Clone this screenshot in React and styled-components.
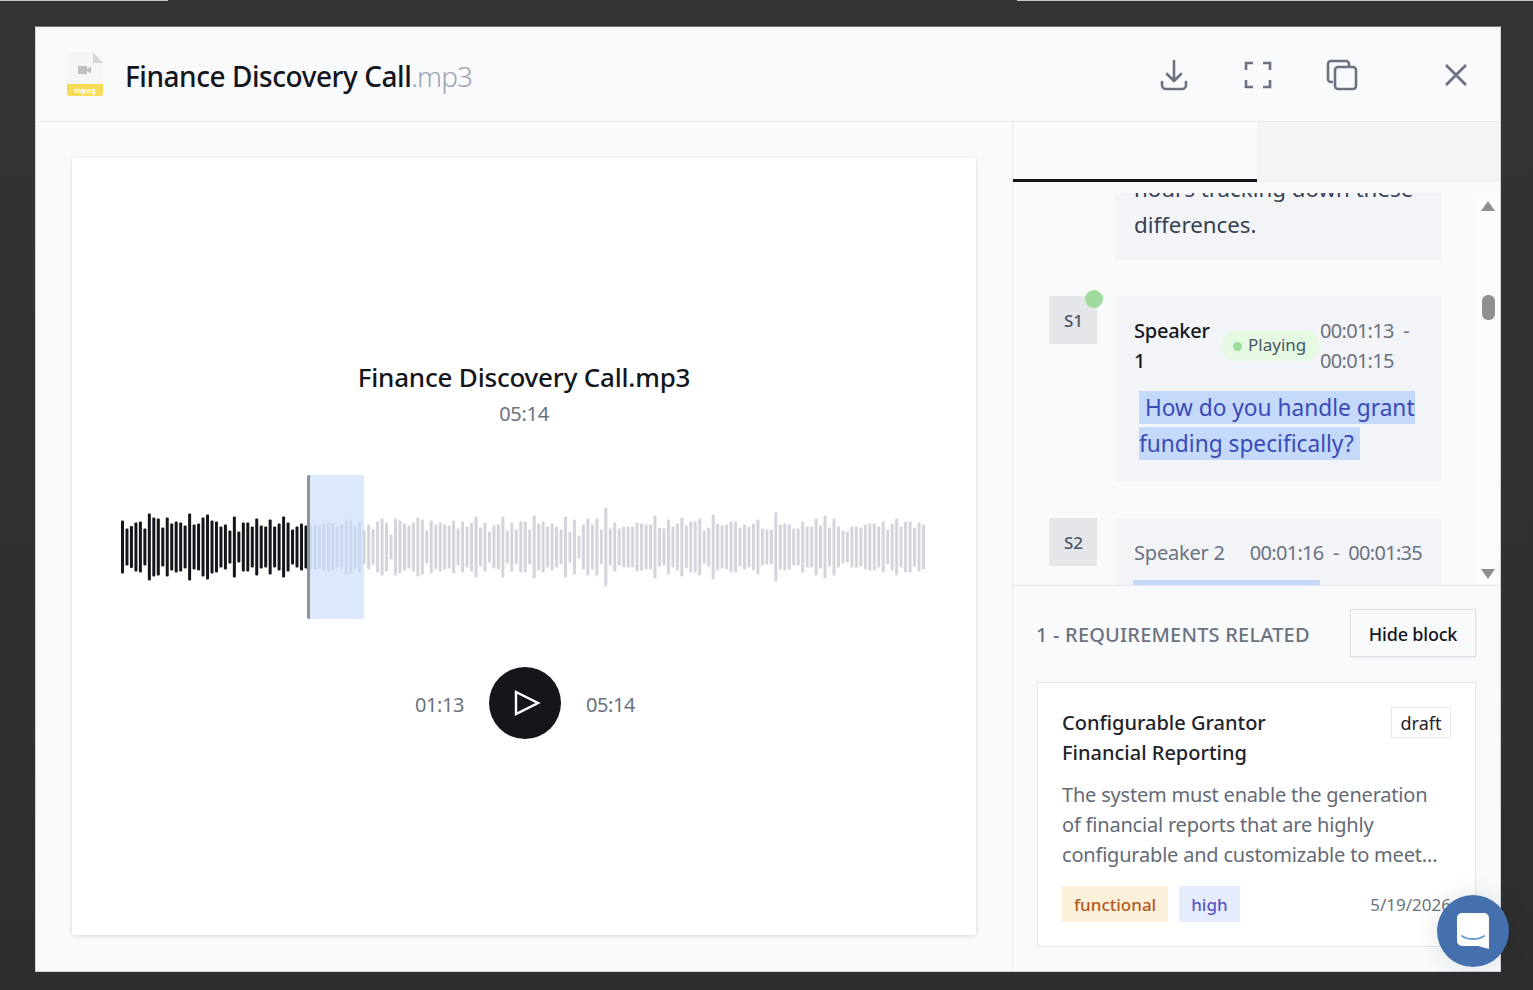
import React from 'react';
import styled, { createGlobalStyle } from 'styled-components';

const FONT = '"Noto Sans", "Open Sans", sans-serif';

const BARS = [
  53, 37, 42, 49, 51, 37, 67, 59, 57, 39, 59, 47, 51, 49, 43, 67, 45, 47, 59, 65, 53, 51, 41, 45, 33, 61, 31, 49, 49, 41,
  57, 43, 41, 55, 41, 47, 61, 49, 35, 41, 47, 43, 45, 45, 43, 47, 49, 47, 41, 45, 55, 53, 43, 51, 34, 45, 36, 51, 57, 49,
  25, 57, 53, 47, 43, 49, 59, 55, 33, 53, 45, 49, 45, 43, 53, 37, 51, 41, 49, 61, 39, 49, 31, 43, 45, 61, 33, 49, 35, 51,
  51, 35, 63, 47, 51, 41, 47, 41, 35, 61, 31, 55, 23, 45, 57, 45, 57, 35, 79, 37, 49, 37, 41, 41, 41, 49, 47, 45, 45, 63,
  39, 37, 55, 41, 47, 59, 43, 51, 51, 57, 33, 39, 65, 47, 43, 45, 51, 51, 39, 45, 41, 47, 55, 37, 35, 35, 69, 45, 47, 45,
  37, 37, 51, 41, 41, 57, 43, 63, 39, 57, 41, 33, 31, 41, 41, 39, 45, 47, 47, 41, 51, 35, 47, 57, 41, 51, 51, 39, 49, 45,
];
const PLAYED = 42;
const WAVE_WIDTH = 804;
const BAR_WIDTH = 3;

const GlobalStyle = createGlobalStyle`
  html, body {
    margin: 0;
    height: 100%;
    background: #333333;
    font-family: ${FONT};
    overflow: hidden;
  }
  * { box-sizing: border-box; }
`;

const Page = styled.div`
  width: 1533px;
  height: 990px;
  display: flex;
  flex-direction: column;
  background: linear-gradient(#343434, #2e2e2e);
`;

const TopEdge = styled.div`
  height: 1px;
  flex: none;
  display: flex;
  justify-content: space-between;
`;

const EdgePiece = styled.span`
  width: ${(p) => p.$width}px;
  background: #c4c7cd;
`;

const ModalSlot = styled.div`
  flex: 1;
  min-height: 0;
  padding: 25px 32px 18px 35px;
`;

const Modal = styled.div`
  height: 100%;
  display: flex;
  flex-direction: column;
  background: #f9fafc;
  border: 1px solid #cfd2d8;
  border-top-color: #6f7278;
`;

const Header = styled.header`
  height: 95px;
  flex: none;
  display: flex;
  align-items: center;
  padding: 0 2px 0 29px;
  border-bottom: 1px solid #e8eaee;
`;

const FileIcon = styled.svg`
  width: 40px;
  height: 46px;
  flex: none;
  margin-right: 20px;
`;

const FileName = styled.h1`
  flex: 1;
  margin: 4px 0 0;
  font-size: 28px;
  font-weight: 500;
  letter-spacing: -0.45px;
  color: #14161c;
`;

const Extension = styled.span`
  font-weight: 300;
  letter-spacing: -1px;
  color: #9ca3af;
`;

const HeaderActions = styled.div`
  display: flex;
  align-items: center;
  margin-top: 2px;
`;

const ActionButton = styled.button`
  width: 84px;
  height: 40px;
  padding: 0;
  border: 0;
  background: none;
  display: flex;
  align-items: center;
  justify-content: center;
  color: #6b7280;
`;

const CloseButton = styled(ActionButton)`
  margin-left: 30px;
`;

const Body = styled.div`
  flex: 1;
  min-height: 0;
  display: flex;
`;

const PlayerPane = styled.section`
  width: 976px;
  flex: none;
  padding: 36px;
`;

const PlayerCard = styled.div`
  height: 777px;
  display: flex;
  flex-direction: column;
  align-items: center;
  justify-content: center;
  padding: 4px 49px 0;
  background: #ffffff;
  box-shadow: 0 1px 4px rgba(30, 40, 60, 0.16);
  border-radius: 2px;
`;

const TrackTitle = styled.div`
  font-size: 26px;
  line-height: 36px;
  font-weight: 500;
  letter-spacing: -0.2px;
  color: #14161c;
`;

const TrackLength = styled.div`
  margin-top: 5px;
  font-size: 20px;
  line-height: 28px;
  letter-spacing: -0.3px;
  color: #6b7280;
`;

const Wave = styled.div`
  position: relative;
  width: ${WAVE_WIDTH + 2}px;
  height: 144px;
  margin-top: 47px;
`;

const WaveDrawing = styled.svg`
  display: block;
`;

const Selection = styled.div`
  position: absolute;
  top: 0;
  bottom: 0;
  left: 186px;
  width: 57px;
  background: rgba(196, 217, 250, 0.6);
  border-left: 3px solid #8e9299;
  border-radius: 2px;
`;

const Controls = styled.div`
  display: flex;
  align-items: center;
  gap: 25px;
  margin: 48px 0 0 2px;
  font-size: 20px;
  letter-spacing: -0.4px;
  color: #6b7280;
`;

const ControlTime = styled.span`
  padding-top: 4px;
`;

const PlayButton = styled.button`
  width: 72px;
  height: 72px;
  padding: 0;
  border: 0;
  border-radius: 50%;
  background: #14161c;
  display: flex;
  align-items: center;
  justify-content: center;

  svg {
    margin-left: 3px;
  }
`;

const SidePane = styled.aside`
  flex: 1;
  min-width: 0;
  display: flex;
  flex-direction: column;
  border-left: 1px solid #e8eaee;
`;

const Tabs = styled.div`
  height: 60px;
  flex: none;
  display: flex;
`;

const Tab = styled.div`
  flex: 1;
  background: ${(p) => (p.$active ? '#f9fafc' : '#f4f4f4')};
  border-bottom: ${(p) => (p.$active ? '3px solid #14161c' : '0')};
`;

const TranscriptArea = styled.div`
  height: 403px;
  flex: none;
  display: flex;
  padding-top: 11px;
`;

const TranscriptClip = styled.div`
  flex: 1;
  min-width: 0;
  overflow: hidden;
`;

const TranscriptList = styled.div`
  margin-top: -22px;
  padding: 0 36px 0 36px;
  display: flex;
  flex-direction: column;
  gap: 36px;
`;

const Entry = styled.div`
  display: flex;
  align-items: flex-start;
  gap: 18px;
  padding-left: ${(p) => p.$indent || 0}px;
`;

const Avatar = styled.div`
  position: relative;
  width: 48px;
  height: 48px;
  flex: none;
  display: flex;
  align-items: center;
  justify-content: center;
  padding-left: 1px;
  background: #e5e6e9;
  font-size: 17px;
  font-weight: 500;
  color: #4b5563;
`;

const LiveDot = styled.span`
  position: absolute;
  top: -6px;
  right: -6px;
  width: 18px;
  height: 18px;
  border-radius: 50%;
  background: #9edb9c;
`;

const Bubble = styled.div`
  width: 326px;
  flex: none;
  background: #f3f4f8;
  padding: ${(p) => (p.$clipped ? '0 19px 17px' : '20px 19px 20px')};
`;

const BubbleHead = styled.div`
  display: flex;
  align-items: center;
  font-size: 20px;
  line-height: 30px;
`;

const SpeakerName = styled.div`
  width: 87px;
  flex: none;
  font-weight: 500;
  letter-spacing: -0.25px;
  color: #14161c;
`;

const MutedSpeaker = styled.div`
  flex: none;
  margin-right: 25px;
  white-space: nowrap;
  letter-spacing: -0.2px;
  color: #6b7280;
`;

const PlayingPill = styled.div`
  width: 99px;
  height: 30px;
  flex: none;
  display: flex;
  align-items: center;
  gap: 6px;
  padding: 0 0 2px 12px;
  border-radius: 15px;
  background: #e6f9e3;
  font-size: 17px;
  color: #4b5563;
`;

const PillDot = styled.span`
  width: 9px;
  height: 9px;
  margin-top: 2px;
  border-radius: 50%;
  background: #9edb9c;
`;

const TimeRange = styled.div`
  letter-spacing: -0.7px;
  word-spacing: 5px;
  color: #6b7280;
  white-space: ${(p) => (p.$single ? 'nowrap' : 'normal')};
`;

const Speech = styled.p`
  margin: 0;
  font-size: 22.3px;
  line-height: 36px;
  color: #374151;
`;

const ActiveSpeech = styled(Speech)`
  margin-top: 14px;
  padding-left: 5px;
  font-size: 22.7px;
  color: #3a4bb8;
`;

const Highlight = styled.span`
  background: #c5d9fb;
  padding: 1px 0;
`;

const NextLine = styled.div`
  width: 187px;
  height: 5px;
  margin: 12px 0 0 -1px;
  background: #c5d9fb;
`;

const Scrollbar = styled.div`
  width: 23px;
  flex: none;
  display: flex;
  flex-direction: column;
  align-items: center;
  padding: 8px 1px 6px 0;
  background: #fafbfd;
`;

const ArrowUp = styled.span`
  width: 0;
  height: 0;
  border: 7px solid transparent;
  border-top: 0;
  border-bottom: 10px solid #8e8f93;
`;

const ArrowDown = styled(ArrowUp)`
  border-top: 10px solid #8e8f93;
  border-bottom: 0;
  margin-top: auto;
`;

const Thumb = styled.span`
  width: 13px;
  height: 25px;
  margin-top: 84px;
  border-radius: 6px;
  background: #8e8f93;
`;

const Requirements = styled.div`
  flex: 1;
  min-height: 0;
  padding: 23px 24px 0;
  border-top: 1px solid #e5e7eb;
`;

const RequirementsHead = styled.div`
  display: flex;
  align-items: center;
  justify-content: space-between;
  height: 48px;
`;

const RequirementsTitle = styled.div`
  margin-left: -1px;
  padding-top: 2px;
  font-size: 20px;
  font-weight: 500;
  letter-spacing: 0.2px;
  color: #6b7280;
`;

const HideButton = styled.button`
  width: 126px;
  height: 48px;
  padding: 2px 0 0;
  border: 1px solid #dde0e6;
  background: #f9fafc;
  font: 500 18px ${FONT};
  letter-spacing: -0.2px;
  color: #14161c;
  box-shadow: 0 1px 2px rgba(30, 40, 60, 0.06);
`;

const RequirementCard = styled.div`
  height: 265px;
  margin-top: 25px;
  padding: 25px 24px 0;
  background: #ffffff;
  border: 1px solid #e5e7eb;
`;

const CardHead = styled.div`
  display: flex;
  align-items: flex-start;
  justify-content: space-between;
`;

const CardTitle = styled.div`
  width: 230px;
  font-size: 20px;
  line-height: 30px;
  font-weight: 500;
  color: #1f2229;
`;

const StatusChip = styled.span`
  width: 60px;
  height: 31px;
  margin-top: -1px;
  display: flex;
  align-items: center;
  justify-content: center;
  background: #ffffff;
  border: 1px solid #e5e7eb;
  font-size: 18px;
  color: #1f2229;
`;

const Description = styled.p`
  max-width: 384px;
  margin: 12px 0 0;
  font-size: 20px;
  line-height: 30px;
  letter-spacing: -0.2px;
  color: #646a76;
  display: -webkit-box;
  -webkit-box-orient: vertical;
  -webkit-line-clamp: 3;
  overflow: hidden;
`;

const CardFoot = styled.div`
  display: flex;
  align-items: center;
  gap: 11px;
  margin-top: 16px;
`;

const Tag = styled.span`
  height: 36px;
  padding: 0 12px;
  display: flex;
  align-items: center;
  font-size: 17px;
  font-weight: 500;
  background: ${(p) => (p.$kind === 'type' ? '#fbf0d9' : '#e5edfc')};
  color: ${(p) => (p.$kind === 'type' ? '#b45a1f' : '#5a55c9')};
`;

const DateText = styled.span`
  margin-left: auto;
  font-size: 17px;
  color: #6b7280;
`;

const ChatButton = styled.button`
  position: fixed;
  left: 1437px;
  top: 895px;
  width: 72px;
  height: 72px;
  padding: 0;
  border: 0;
  border-radius: 50%;
  background: #4570ae;
  display: flex;
  align-items: center;
  justify-content: center;
  box-shadow: 0 0 24px rgba(20, 25, 40, 0.12);
`;

const Waveform = () => {
  const pitch = (WAVE_WIDTH - BAR_WIDTH) / (BARS.length - 1);
  return (
    <WaveDrawing width={WAVE_WIDTH} height="144" viewBox={`0 0 ${WAVE_WIDTH} 144`}>
      {BARS.map((h, i) => (
        <rect
          key={i}
          x={i * pitch}
          y={72 - h / 2}
          width={BAR_WIDTH}
          height={h}
          rx="1"
          fill={i < PLAYED ? '#14161c' : '#d2d5db'}
        />
      ))}
    </WaveDrawing>
  );
};

export default function App() {
  return (
    <Page>
      <GlobalStyle />
      <TopEdge>
        <EdgePiece $width={168} />
        <EdgePiece $width={516} />
      </TopEdge>
      <ModalSlot>
        <Modal>
          <Header>
            <FileIcon viewBox="0 0 40 46">
              <path d="M3 1h25l10 11v30a3 3 0 0 1-3 3H5a3 3 0 0 1-3-3V2z" fill="#f5f5f5" />
              <path d="M28 1l10 11H28z" fill="#d4d5d9" />
              <path d="M2 33h36v9a3 3 0 0 1-3 3H5a3 3 0 0 1-3-3z" fill="#f6dc55" />
              <rect x="13" y="15" width="9" height="8" fill="#bfc0c4" />
              <path d="M22 18l4-2.5v7L22 20z" fill="#bfc0c4" />
              <text x="20" y="42" textAnchor="middle" fontSize="7.5" fontWeight="700" fill="#ffffff" fontFamily={FONT}>mpeg</text>
            </FileIcon>
            <FileName>Finance Discovery Call<Extension>.mp3</Extension></FileName>
            <HeaderActions>
              <ActionButton aria-label="Download">
                <svg width="30" height="32" viewBox="0 0 30 32" fill="none" stroke="currentColor" strokeWidth="2.6" strokeLinecap="round" strokeLinejoin="round">
                  <path d="M15 2v20M8 15l7 7 7-7" />
                  <path d="M3 23v3a4 4 0 0 0 4 4h16a4 4 0 0 0 4-4v-3" />
                </svg>
              </ActionButton>
              <ActionButton aria-label="Fullscreen">
                <svg width="28" height="28" viewBox="0 0 28 28" fill="none" stroke="currentColor" strokeWidth="2.6">
                  <path d="M9 2H2v7M19 2h7v7M9 26H2v-7M19 26h7v-7" />
                </svg>
              </ActionButton>
              <ActionButton aria-label="Copy">
                <svg width="32" height="32" viewBox="0 0 32 32" fill="none" stroke="currentColor" strokeWidth="2.6" strokeLinejoin="round">
                  <path d="M7 23H5a3 3 0 0 1-3-3V5a3 3 0 0 1 3-3h15a3 3 0 0 1 3 3v2" />
                  <rect x="9" y="8" width="21" height="22" rx="3" />
                </svg>
              </ActionButton>
              <CloseButton aria-label="Close">
                <svg width="24" height="24" viewBox="0 0 24 24" fill="none" stroke="currentColor" strokeWidth="2.8">
                  <path d="M2 2l20 20M22 2L2 22" />
                </svg>
              </CloseButton>
            </HeaderActions>
          </Header>
          <Body>
            <PlayerPane>
              <PlayerCard>
                <TrackTitle>Finance Discovery Call.mp3</TrackTitle>
                <TrackLength>05:14</TrackLength>
                <Wave>
                  <Waveform />
                  <Selection />
                </Wave>
                <Controls>
                  <ControlTime>01:13</ControlTime>
                  <PlayButton aria-label="Play">
                    <svg width="28" height="28" viewBox="0 0 28 28" fill="none" stroke="#ffffff" strokeWidth="2.4" strokeLinejoin="miter">
                      <path d="M3 3l22 11L3 25z" />
                    </svg>
                  </PlayButton>
                  <ControlTime>05:14</ControlTime>
                </Controls>
              </PlayerCard>
            </PlayerPane>
            <SidePane>
              <Tabs>
                <Tab $active />
                <Tab />
              </Tabs>
              <TranscriptArea>
                <TranscriptClip>
                  <TranscriptList>
                    <Entry $indent={66}>
                      <Bubble $clipped>
                        <Speech>hours tracking down these differences.</Speech>
                      </Bubble>
                    </Entry>
                    <Entry>
                      <Avatar>S1<LiveDot /></Avatar>
                      <Bubble>
                        <BubbleHead>
                          <SpeakerName>Speaker 1</SpeakerName>
                          <PlayingPill><PillDot />Playing</PlayingPill>
                          <TimeRange>00:01:13 - 00:01:15</TimeRange>
                        </BubbleHead>
                        <ActiveSpeech>
                          <Highlight>&nbsp;How do you handle grant funding specifically?&nbsp;</Highlight>
                        </ActiveSpeech>
                      </Bubble>
                    </Entry>
                    <Entry>
                      <Avatar>S2</Avatar>
                      <Bubble>
                        <BubbleHead>
                          <MutedSpeaker>Speaker 2</MutedSpeaker>
                          <TimeRange $single>00:01:16 - 00:01:35</TimeRange>
                        </BubbleHead>
                        <NextLine />
                      </Bubble>
                    </Entry>
                  </TranscriptList>
                </TranscriptClip>
                <Scrollbar>
                  <ArrowUp />
                  <Thumb />
                  <ArrowDown />
                </Scrollbar>
              </TranscriptArea>
              <Requirements>
                <RequirementsHead>
                  <RequirementsTitle>1 - REQUIREMENTS RELATED</RequirementsTitle>
                  <HideButton>Hide block</HideButton>
                </RequirementsHead>
                <RequirementCard>
                  <CardHead>
                    <CardTitle>Configurable Grantor Financial Reporting</CardTitle>
                    <StatusChip>draft</StatusChip>
                  </CardHead>
                  <Description>
                    The system must enable the generation of financial reports that are highly configurable and customizable to meet the diverse requirements of each grantor.
                  </Description>
                  <CardFoot>
                    <Tag $kind="type">functional</Tag>
                    <Tag $kind="priority">high</Tag>
                    <DateText>5/19/2026</DateText>
                  </CardFoot>
                </RequirementCard>
              </Requirements>
            </SidePane>
          </Body>
        </Modal>
      </ModalSlot>
      <ChatButton aria-label="Open chat">
        <svg width="32" height="36" viewBox="0 0 32 36" fill="none">
          <path d="M5 0h22a5 5 0 0 1 5 5v31l-11-3H5a5 5 0 0 1-5-5V5a5 5 0 0 1 5-5z" fill="#ffffff" />
          <path d="M5 23c6 4 16 4 22 0" stroke="#6d9bd8" strokeWidth="2" strokeLinecap="round" />
        </svg>
      </ChatButton>
    </Page>
  );
}
